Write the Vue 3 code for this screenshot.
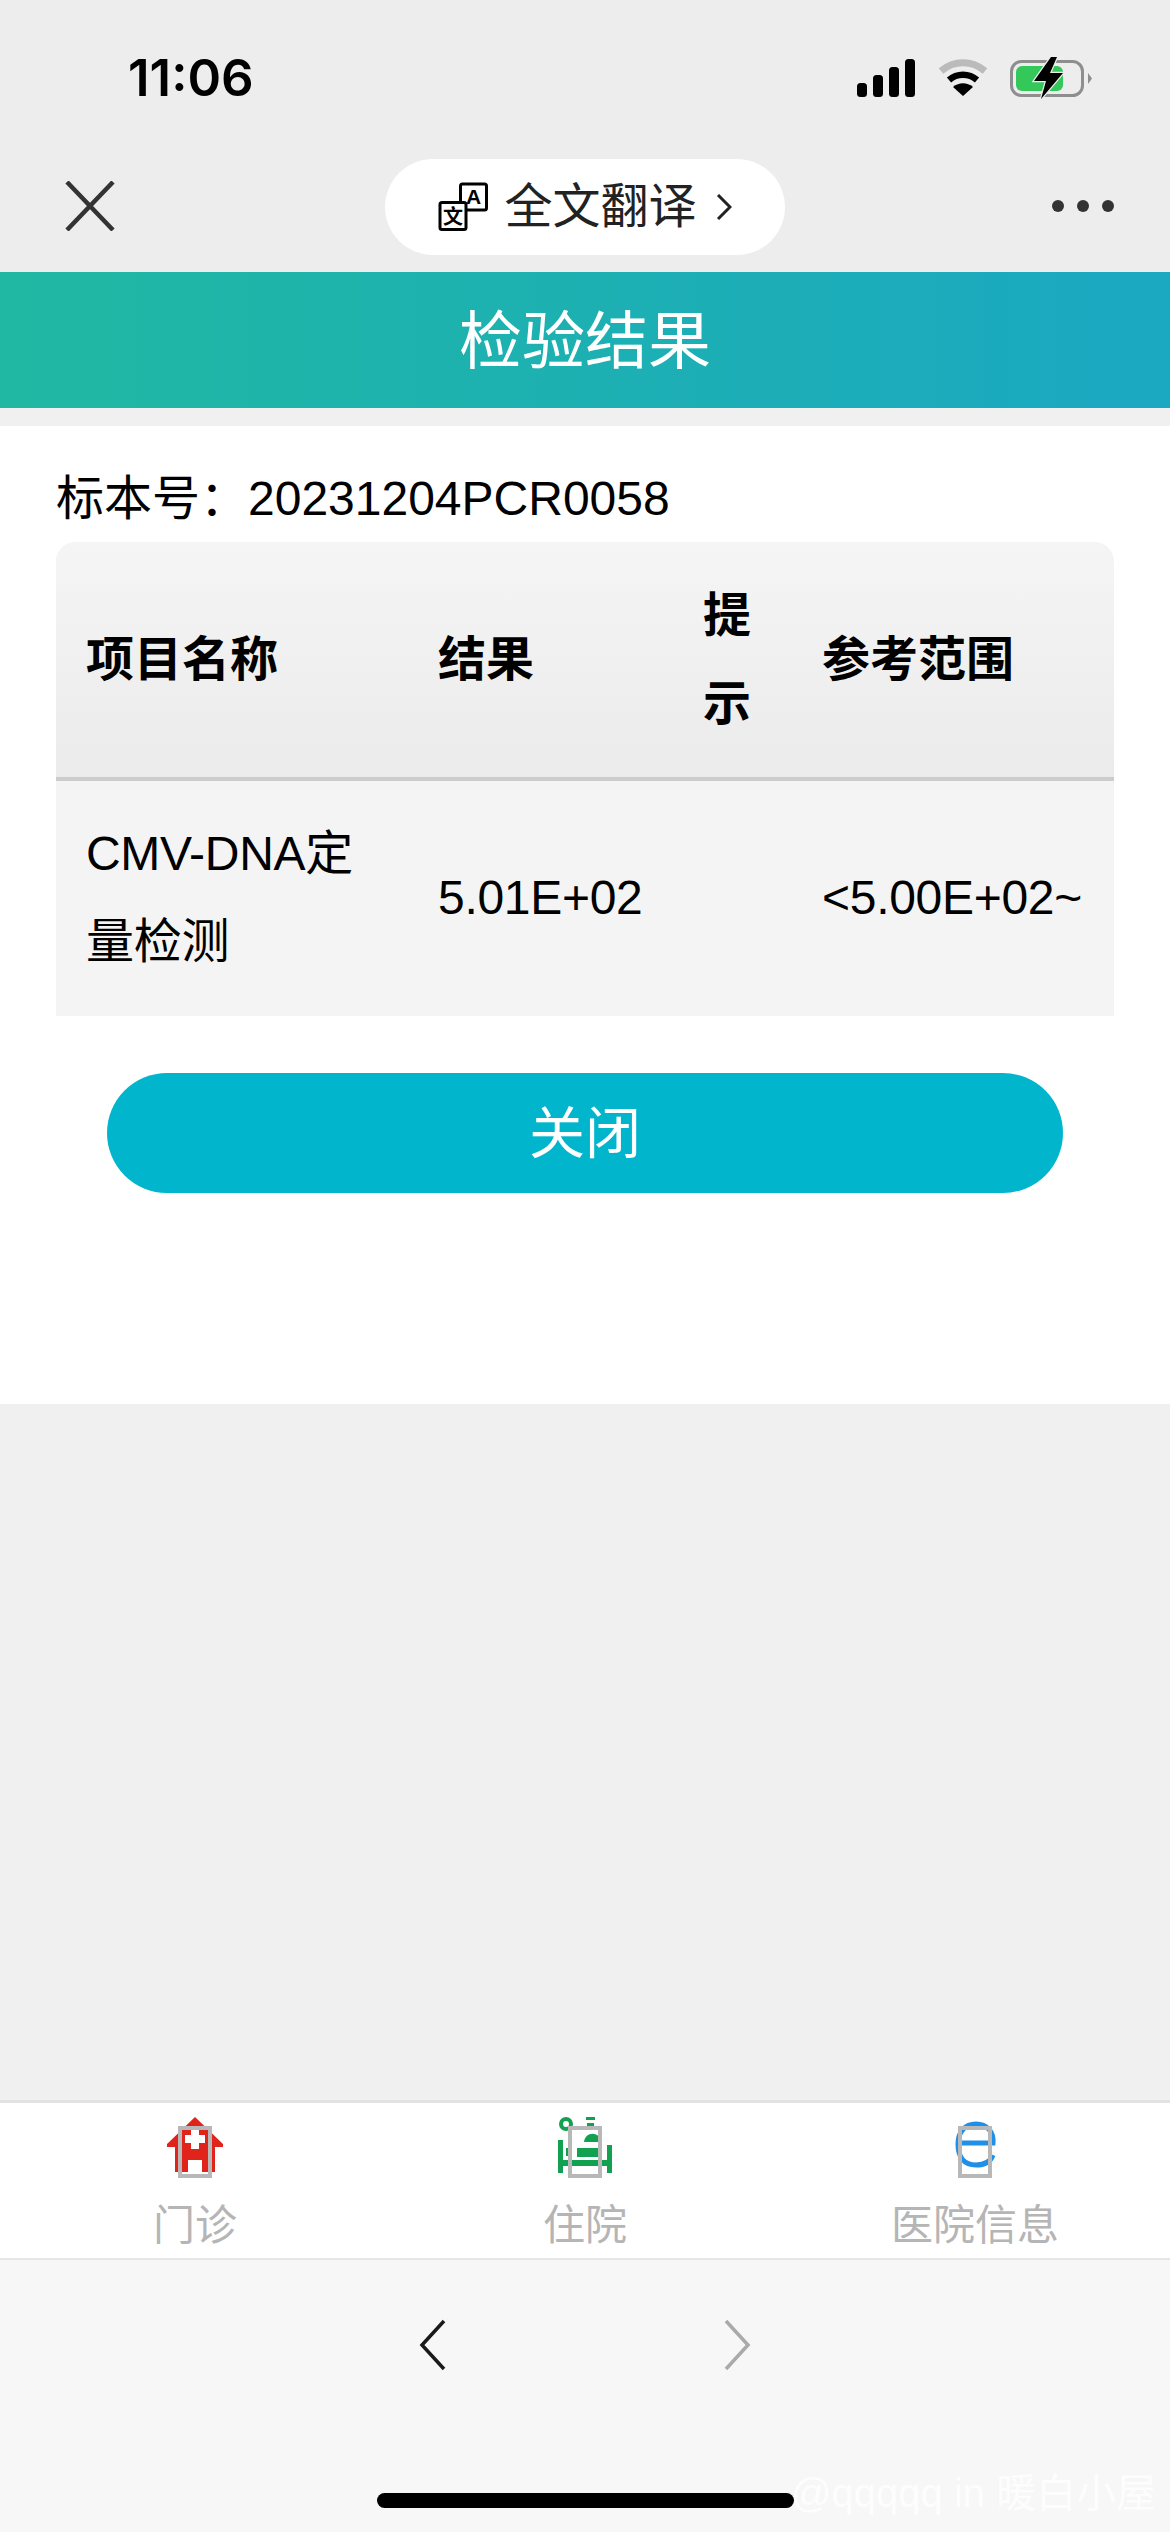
<template>
  <div class="page">
    <!-- Status bar -->
    <div class="status-bar">
      <span class="time">11:06</span>
      <div class="status-icons">
        <svg class="signal" width="58" height="38" viewBox="0 0 58 38">
          <rect x="0" y="24" width="10" height="14" rx="3.5" />
          <rect x="16" y="16" width="10" height="22" rx="3.5" />
          <rect x="32" y="8" width="10" height="30" rx="3.5" />
          <rect x="48" y="0" width="10" height="38" rx="3.5" />
        </svg>
        <svg class="wifi" width="50" height="38" viewBox="0 0 50 38">
          <path d="M3 12 C16 1 34 1 47 12" fill="none" stroke="#bbb" stroke-width="7" />
          <path d="M11 21 C19 14 31 14 39 21" fill="none" stroke="#000" stroke-width="6.5" />
          <path d="M25 37 L15 28 C21 23 29 23 35 28 Z" fill="#000" />
        </svg>
        <svg class="battery" width="84" height="44" viewBox="0 0 84 44">
          <rect x="1.5" y="5.5" width="71" height="34" rx="10" fill="none" stroke="#8e8e8e" stroke-width="3" />
          <rect x="6" y="10" width="47" height="25" rx="6" fill="#34c759" />
          <path d="M78 17 L82 22.5 L78 28 Z" fill="#8e8e8e" />
          <path d="M41 1 L24 25 H36 L31 43 L53 17 H40 L47 1 Z" fill="#000" stroke="#ededed" stroke-width="2.5" paint-order="stroke" />
        </svg>
      </div>
    </div>

    <!-- WeChat nav -->
    <div class="nav-bar">
      <svg class="close" width="50" height="50" viewBox="0 0 50 50">
        <path d="M2 1 L48 49 M48 1 L2 49" stroke="#333" stroke-width="4.5" fill="none" />
      </svg>
      <div class="translate">
        <svg width="50" height="50" viewBox="0 0 50 50">
          <rect x="22.5" y="2" width="26" height="26" rx="2" fill="#fff" stroke="#000" stroke-width="3" />
          <text x="35.5" y="22" class="tr-a">A</text>
          <rect x="2" y="20.5" width="26" height="27" rx="2" fill="#fff" stroke="#000" stroke-width="3" />
          <text x="15" y="42" class="tr-wen">文</text>
        </svg>
        <span>全文翻译</span>
        <svg class="tr-arrow" width="16" height="26" viewBox="0 0 16 26">
          <path d="M2 1 L14 13 L2 25" fill="none" stroke="#222" stroke-width="3" />
        </svg>
      </div>
      <div class="dots"><i></i><i></i><i></i></div>
    </div>

    <div class="title">检验结果</div>

    <div class="main">
      <div class="card">
        <div class="sample">标本号：20231204PCR0058</div>
        <table class="result-table">
          <colgroup>
            <col style="width: 352px" />
            <col style="width: 265px" />
            <col style="width: 119px" />
            <col style="width: 322px" />
          </colgroup>
          <thead>
            <tr>
              <th>项目名称</th>
              <th>结果</th>
              <th>提示</th>
              <th>参考范围</th>
            </tr>
          </thead>
          <tbody>
            <tr v-for="row in rows" :key="row.name">
              <td>{{ row.name }}</td>
              <td>{{ row.result }}</td>
              <td>{{ row.hint }}</td>
              <td>{{ row.range }}</td>
            </tr>
          </tbody>
        </table>
        <div class="close-btn">关闭</div>
      </div>
    </div>

    <!-- Tabs -->
    <div class="tabs">
      <div class="tab">
        <svg width="64" height="70" viewBox="0 0 64 70">
          <g class="soft">
            <path fill-rule="evenodd" fill="#e0241c" d="M32 4 L60 31 L60 34 L52 34 V59 H39 V47 H25 V59 H12 V34 L4 34 L4 31 Z M28 16 V22 H22 V30 H28 V36 H36 V30 H42 V22 H36 V16 Z" />
          </g>
          <rect x="17" y="15" width="30" height="48" class="box" />
        </svg>
        <span>门诊</span>
      </div>
      <div class="tab">
        <svg width="64" height="70" viewBox="0 0 64 70">
          <g class="soft" fill="#12a150">
            <circle cx="13" cy="11" r="5" fill="none" stroke="#12a150" stroke-width="4" />
            <rect x="33" y="4" width="9" height="3" />
            <rect x="34" y="10" width="7" height="5" />
            <path d="M31 29 C32 18 47 18 48 29 Z" />
            <rect x="5" y="27" width="5" height="33" />
            <rect x="54" y="32" width="5" height="28" />
            <rect x="10" y="47" width="44" height="6" />
            <rect x="24" y="35" width="21" height="9" />
            <rect x="13" y="35" width="4" height="8" />
          </g>
          <rect x="17" y="15" width="30" height="48" class="box" />
        </svg>
        <span>住院</span>
      </div>
      <div class="tab">
        <svg width="64" height="70" viewBox="0 0 64 70">
          <g class="soft">
            <path d="M50 42 C47 50 40 52 33 52 C20 52 15 43 15 31 C15 19 22 11 33 11 C44 11 51 19 50 30 H15" fill="none" stroke="#1f8fe8" stroke-width="5" />
          </g>
          <rect x="17" y="15" width="30" height="48" class="box" />
        </svg>
        <span>医院信息</span>
      </div>
    </div>

    <!-- Browser bar -->
    <div class="browser-bar">
      <div class="arrows">
        <svg width="28" height="52" viewBox="0 0 28 52">
          <path d="M25 2 L3 26 L25 50" fill="none" stroke="#1a1a1a" stroke-width="3.5" />
        </svg>
        <svg width="28" height="52" viewBox="0 0 28 52">
          <path d="M3 2 L25 26 L3 50" fill="none" stroke="#aaa" stroke-width="3.5" />
        </svg>
      </div>
      <div class="home-line"></div>
      <span class="watermark">@qqqqq in 暖白小屋</span>
    </div>
  </div>
</template>

<script setup>
const rows = [
  { name: 'CMV-DNA定量检测', result: '5.01E+02', hint: '', range: '<5.00E+02~' }
]
</script>

<style>
html,
body {
  margin: 0;
  background: #f0f0f0;
}
</style>

<style scoped>
.page {
  width: 1170px;
  height: 2532px;
  display: flex;
  flex-direction: column;
  font-family: "Liberation Sans", "Noto Sans CJK SC", sans-serif;
  background: #f0f0f0;
  color: #000;
  overflow: hidden;
}

.status-bar {
  height: 146px;
  background: #ededed;
  display: flex;
  justify-content: space-between;
  padding: 50px 76px 0 128px;
  box-sizing: border-box;
}

.time {
  font-family: Inter, "Liberation Sans", sans-serif;
  font-size: 51px;
  font-weight: 600;
  line-height: 56px;
}

.status-icons {
  display: flex;
  align-items: flex-start;
  padding-top: 9px;
}

.signal {
  margin-right: 23px;
}

.wifi {
  margin-right: 22px;
}

.battery {
  margin-top: -3px;
}

.nav-bar {
  height: 126px;
  background: #ededed;
  display: flex;
  align-items: flex-start;
  padding: 13px 56px 0 65px;
  box-sizing: border-box;
}

.close {
  margin-top: 22px;
}

.translate {
  width: 400px;
  height: 96px;
  margin-left: 270px;
  background: #fff;
  border-radius: 48px;
  display: flex;
  align-items: center;
  justify-content: center;
  gap: 16px;
  font-size: 48px;
  line-height: 92px;
  color: #222;
}

.tr-arrow {
  margin-left: 3px;
}

.tr-a {
  font-family: "Liberation Sans", sans-serif;
  font-size: 21px;
  font-weight: 700;
  text-anchor: middle;
}

.tr-wen {
  font-family: "Noto Sans CJK SC", sans-serif;
  font-size: 20px;
  font-weight: 700;
  text-anchor: middle;
}

.dots {
  margin-left: auto;
  margin-top: 41px;
  display: flex;
  gap: 13px;
}

.dots i {
  width: 12px;
  height: 12px;
  border-radius: 50%;
  background: #333;
}

.title {
  height: 136px;
  line-height: 139px;
  background: linear-gradient(90deg, #20b8a2, #1aa8c2);
  color: #fff;
  font-size: 63px;
  text-align: center;
}

.main {
  flex: 1;
  padding-top: 18px;
}

.card {
  height: 978px;
  box-sizing: border-box;
  background: #fff;
  padding: 29px 56px 0;
}

.sample {
  font-size: 48px;
  line-height: 87px;
}

.result-table {
  width: 1058px;
  table-layout: fixed;
  border-collapse: separate;
  border-spacing: 0;
  background: #f4f4f4;
  font-size: 48px;
  line-height: 88px;
  border-radius: 20px 20px 0 0;
  overflow: hidden;
}

.result-table th {
  padding: 30px 0 29px 30px;
  text-align: left;
  font-weight: 700;
  background: linear-gradient(#f5f5f5, #ebebeb);
  border-bottom: 4px solid #ccc;
}

.result-table td {
  padding: 29px 0 30px 30px;
  word-break: break-all;
  letter-spacing: -0.3px;
}

.result-table td:first-child {
  padding-right: 30px;
}

.close-btn {
  width: 956px;
  height: 120px;
  margin: 57px 0 0 51px;
  border-radius: 60px;
  background: #00b5cc;
  color: #fff;
  font-size: 56px;
  line-height: 122px;
  text-align: center;
}

.tabs {
  height: 160px;
  box-sizing: border-box;
  background: #fff;
  border-top: 3px solid #e2e2e2;
  border-bottom: 2px solid #e6e6e6;
  display: grid;
  grid-template-columns: repeat(3, 1fr);
}

.tab {
  display: flex;
  flex-direction: column;
  align-items: center;
  padding-top: 10px;
  color: #b5b5b5;
  font-size: 42px;
  line-height: 50px;
}

.tab svg {
  margin-bottom: 18px;
}

.soft {
  filter: blur(0.7px);
}

.box {
  fill: none;
  stroke: #b8b8b8;
  stroke-width: 4;
}

.browser-bar {
  flex: none;
  height: 272px;
  background: #f7f7f7;
  position: relative;
}

.arrows {
  display: flex;
  justify-content: center;
  gap: 276px;
  padding-top: 59px;
}

.home-line {
  position: absolute;
  left: 377px;
  top: 233px;
  width: 417px;
  height: 15px;
  border-radius: 8px;
  background: #000;
}

.watermark {
  position: absolute;
  left: 791px;
  top: 210px;
  font-size: 40px;
  line-height: 46px;
  color: rgba(255, 255, 255, 0.75);
  white-space: nowrap;
}
</style>
